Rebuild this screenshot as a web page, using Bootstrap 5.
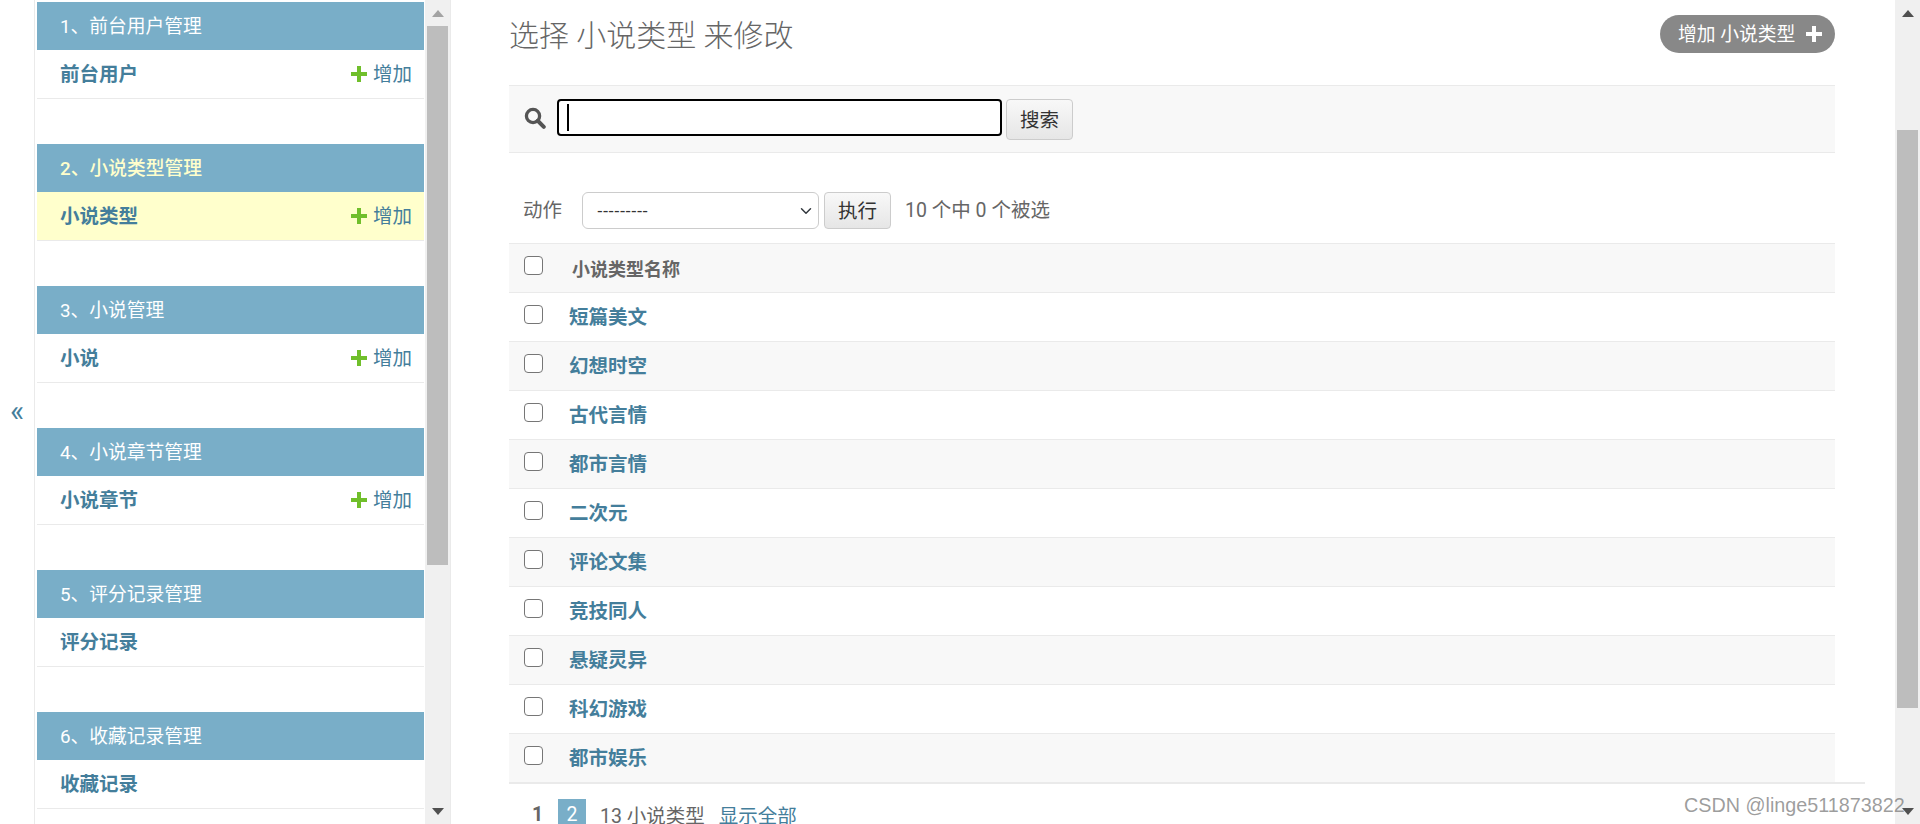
<!DOCTYPE html>
<html lang="zh">
<head>
<meta charset="utf-8">
<title>选择 小说类型 来修改</title>
<link rel="stylesheet" href="https://cdn.jsdelivr.net/npm/bootstrap@5.3.0/dist/css/bootstrap.min.css">
<style>
html,body{height:824px;overflow:hidden}
body{font-family:Roboto,"Noto Sans CJK SC",sans-serif;font-size:19.5px;color:#666;background:#fff}
a{text-decoration:none;color:#447e9b}
.page-shell{height:824px;width:1920px}
.gutter{width:34px;color:#447e9b;font-size:30px;line-height:1;padding-bottom:2px}
.side-panel{width:417px;height:824px;border-left:1px solid #eaeaea;border-right:1px solid #eaeaea;padding-left:2px}
.side-list{width:387px;padding-top:2px}
.mod-cap{height:48px;background:#79aec8;color:#fff;font-size:18.75px;padding-left:23px;line-height:50px}
.mod-cap.is-on{color:#ffc;font-weight:500}
.mod-row{height:49px;border-bottom:1px solid #eaeaea;padding:1px 12px 0 23px;margin-bottom:45px}
.mod-row.is-on{background:#ffc}
.mod-row strong{font-weight:700;color:#447e9b}
.add-lnk svg{margin-right:6px;margin-top:-1px}
.fake-bar{background:#f0f0f0;width:25px;height:824px}
.side-bar{margin-left:1px}
.arrow-box{height:26px;flex:none}
.arrow-foot{margin-top:auto}
.fake-thumb{background:#bdbdbd;width:21px;margin-left:2px;flex:none}
.side-thumb{height:539px}
.page-thumb{height:578px;margin-top:104px}
.main-area{width:1444px;padding:0 0 0 58px;position:relative}
.head-line{width:1326px;height:85px;padding-top:15px}
.page-title{font-size:30px;font-weight:300;color:#666;margin:0;line-height:42px;font-family:Roboto,"Noto Sans CJK SC",sans-serif}
.add-pill{height:38px;width:175px;background:#888;color:#fff;border-radius:19px;font-size:18.75px;padding-left:18px;gap:11px}
.add-pill span{padding-top:2px}
.search-strip{width:1326px;height:68px;background:#f8f8f8;border-top:1px solid #eaeaea;border-bottom:1px solid #eaeaea;padding:13px 0 0 15px}
.search-strip svg{margin-right:11px;margin-top:8px}
.search-box{width:445px;height:37px;border:2px solid #000;border-radius:4px;background:#fff;padding:3px 8px;flex:none}
.caret-mark{width:2px;height:27px;background:#000;display:block}
.plain-btn{background:linear-gradient(#f8f8f8,#e6e6e6);border:1px solid #ccc;border-radius:4px;color:#333;font-size:19.5px;padding:2px 0 0;line-height:1}
.go-search{width:67px;height:41px;margin-left:4px}
.act-line{width:1326px;height:90px;padding:39px 0 0 14px}
.act-line label{width:59px;margin-top:7px;line-height:24px;flex:none}
.act-select{width:237px;height:37px;border:1px solid #ccc;border-radius:6px;font-size:17px;color:#333;padding:0 14px;font-family:"Liberation Sans",sans-serif;background-position:right 4px center;flex:none}
.go-act{width:67px;height:37px;margin-left:5px;flex:none}
.count-note{margin-left:14px;margin-top:7px;line-height:24px}
.data-grid{width:1326px;margin:0;color:#666;--bs-table-bg:transparent}
.data-grid th,.data-grid td{padding:0;border-bottom:1px solid #eaeaea;vertical-align:middle;height:49px;box-shadow:none}
.data-grid thead th{background:#f8f8f8;border-top:1px solid #eaeaea;font-size:18px;font-weight:700;height:49px;color:#666}
.data-grid tbody tr:nth-child(even) td{background:#f8f8f8}
.tick-cell{width:60px;padding-left:15px!important}
.tick-cell .form-check-input{width:19px;height:19px;margin:0;border:1px solid #767676;border-radius:4px;display:block;position:relative;top:-3px}
.head-name{margin-left:3px;position:relative;top:1px}
.data-grid td a{font-weight:700;position:relative;top:1px}
.foot-line{width:1356px;border-top:2px solid #eaeaea;padding:15px 0 0 18px;margin-top:-1px;height:45px}
.page-now{font-weight:700;width:26px;margin-left:5px;margin-top:1px}
.page-cur{background:#79aec8;color:#fff;width:28px;height:32px;text-align:center;margin-right:14px;line-height:32px}
.foot-text{margin-right:14px;margin-top:3px}
.foot-link{margin-top:3px}
.mark-csdn{position:absolute;left:1684px;top:793px;font-family:"Liberation Sans",sans-serif;font-size:19.75px;color:rgba(125,125,125,.75);line-height:24px}
</style>
</head>
<body>
<div class="page-shell d-flex">
  <div class="gutter d-flex align-items-center justify-content-center">«</div>
  <div class="side-panel d-flex">
    <div class="side-list flex-shrink-0">
      <div class="mod-cap">1、前台用户管理</div>
      <div class="mod-row d-flex align-items-center justify-content-between"><strong>前台用户</strong><a class="add-lnk d-flex align-items-center" href="#"><svg width="16" height="16" viewBox="0 0 16 16"><path d="M6 0h4v6h6v4h-6v6H6v-6H0V6h6z" fill="#70bf2b"/></svg>增加</a></div>
      <div class="mod-cap is-on">2、小说类型管理</div>
      <div class="mod-row is-on d-flex align-items-center justify-content-between"><strong>小说类型</strong><a class="add-lnk d-flex align-items-center" href="#"><svg width="16" height="16" viewBox="0 0 16 16"><path d="M6 0h4v6h6v4h-6v6H6v-6H0V6h6z" fill="#70bf2b"/></svg>增加</a></div>
      <div class="mod-cap">3、小说管理</div>
      <div class="mod-row d-flex align-items-center justify-content-between"><strong>小说</strong><a class="add-lnk d-flex align-items-center" href="#"><svg width="16" height="16" viewBox="0 0 16 16"><path d="M6 0h4v6h6v4h-6v6H6v-6H0V6h6z" fill="#70bf2b"/></svg>增加</a></div>
      <div class="mod-cap">4、小说章节管理</div>
      <div class="mod-row d-flex align-items-center justify-content-between"><strong>小说章节</strong><a class="add-lnk d-flex align-items-center" href="#"><svg width="16" height="16" viewBox="0 0 16 16"><path d="M6 0h4v6h6v4h-6v6H6v-6H0V6h6z" fill="#70bf2b"/></svg>增加</a></div>
      <div class="mod-cap">5、评分记录管理</div>
      <div class="mod-row d-flex align-items-center"><strong>评分记录</strong></div>
      <div class="mod-cap">6、收藏记录管理</div>
      <div class="mod-row d-flex align-items-center"><strong>收藏记录</strong></div>
    </div>
    <div class="fake-bar side-bar d-flex flex-column">
      <div class="arrow-box d-flex align-items-center justify-content-center"><svg width="12" height="7" viewBox="0 0 12 7"><path d="M6 0l6 7H0z" fill="#a3a3a3"/></svg></div>
      <div class="fake-thumb side-thumb"></div>
      <div class="arrow-box arrow-foot d-flex align-items-center justify-content-center"><svg width="12" height="7" viewBox="0 0 12 7"><path d="M0 0h12L6 7z" fill="#505050"/></svg></div>
    </div>
  </div>
  <main class="main-area flex-shrink-0">
    <div class="head-line d-flex justify-content-between align-items-start">
      <h1 class="page-title">选择 小说类型 来修改</h1>
      <a class="add-pill d-flex align-items-center" href="#"><span class="text-white">增加 小说类型</span><svg width="16" height="16" viewBox="0 0 16 16"><path d="M6 0h4v6h6v4h-6v6H6v-6H0V6h6z" fill="#fff"/></svg></a>
    </div>
    <div class="search-strip d-flex align-items-start">
      <svg width="22" height="22" viewBox="0 0 20 20"><circle cx="8.2" cy="8.2" r="6" fill="none" stroke="#555" stroke-width="3"/><path d="M12.5 12.5l5.5 5.5" stroke="#555" stroke-width="3.6" stroke-linecap="round"/></svg>
      <div class="search-box"><span class="caret-mark"></span></div>
      <button class="btn plain-btn go-search" type="button">搜索</button>
    </div>
    <div class="act-line d-flex align-items-start">
      <label>动作</label>
      <select class="form-select act-select"><option>---------</option></select>
      <button class="btn plain-btn go-act" type="button">执行</button>
      <span class="count-note">10 个中 0 个被选</span>
    </div>
    <table class="table data-grid">
      <thead><tr><th class="tick-cell"><input class="form-check-input" type="checkbox"></th><th><span class="head-name">小说类型名称</span></th></tr></thead>
      <tbody>
        <tr><td class="tick-cell"><input class="form-check-input" type="checkbox"></td><td><a href="#">短篇美文</a></td></tr>
        <tr><td class="tick-cell"><input class="form-check-input" type="checkbox"></td><td><a href="#">幻想时空</a></td></tr>
        <tr><td class="tick-cell"><input class="form-check-input" type="checkbox"></td><td><a href="#">古代言情</a></td></tr>
        <tr><td class="tick-cell"><input class="form-check-input" type="checkbox"></td><td><a href="#">都市言情</a></td></tr>
        <tr><td class="tick-cell"><input class="form-check-input" type="checkbox"></td><td><a href="#">二次元</a></td></tr>
        <tr><td class="tick-cell"><input class="form-check-input" type="checkbox"></td><td><a href="#">评论文集</a></td></tr>
        <tr><td class="tick-cell"><input class="form-check-input" type="checkbox"></td><td><a href="#">竞技同人</a></td></tr>
        <tr><td class="tick-cell"><input class="form-check-input" type="checkbox"></td><td><a href="#">悬疑灵异</a></td></tr>
        <tr><td class="tick-cell"><input class="form-check-input" type="checkbox"></td><td><a href="#">科幻游戏</a></td></tr>
        <tr><td class="tick-cell"><input class="form-check-input" type="checkbox"></td><td><a href="#">都市娱乐</a></td></tr>
      </tbody>
    </table>
    <div class="foot-line d-flex align-items-start">
      <span class="page-now">1</span><span class="page-cur">2</span><span class="foot-text">13 小说类型</span><a class="foot-link" href="#">显示全部</a>
    </div>
  </main>
  <div class="fake-bar d-flex flex-column flex-shrink-0">
    <div class="arrow-box d-flex align-items-center justify-content-center"><svg width="12" height="7" viewBox="0 0 12 7"><path d="M6 0l6 7H0z" fill="#505050"/></svg></div>
    <div class="fake-thumb page-thumb"></div>
    <div class="arrow-box arrow-foot d-flex align-items-center justify-content-center"><svg width="12" height="7" viewBox="0 0 12 7"><path d="M0 0h12L6 7z" fill="#505050"/></svg></div>
  </div>
</div>
<div class="mark-csdn">CSDN @linge511873822</div>
<script src="https://cdn.jsdelivr.net/npm/bootstrap@5.3.0/dist/js/bootstrap.bundle.min.js"></script>
</body>
</html>
